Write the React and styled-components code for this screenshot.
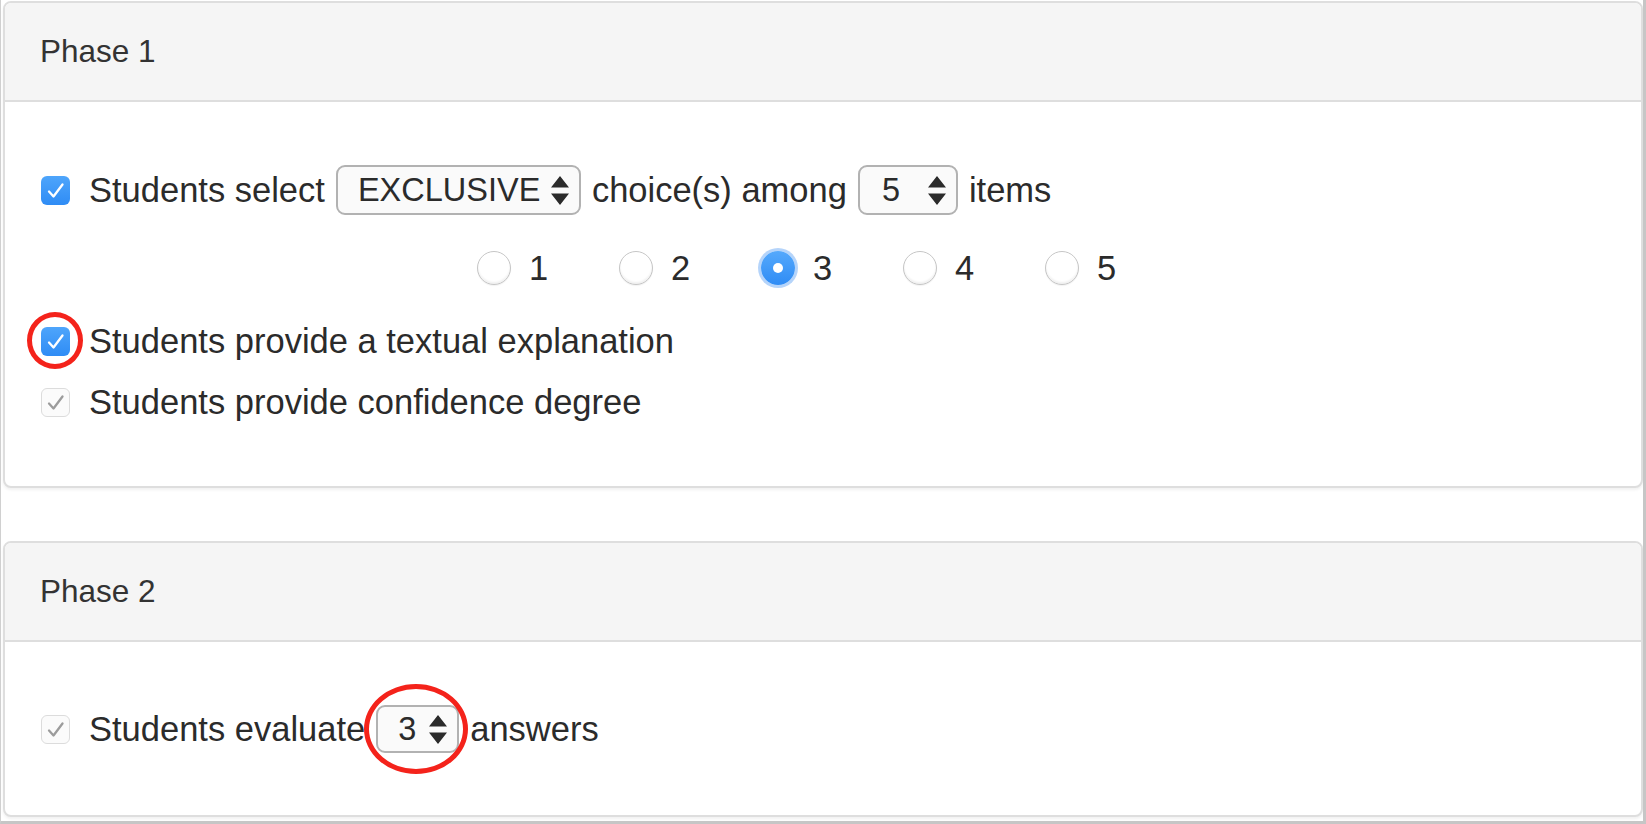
import React from 'react';
import styled, { createGlobalStyle, css } from 'styled-components';

const GlobalStyle = createGlobalStyle`
  html, body {
    margin: 0;
    padding: 0;
    background: #fff;
  }
  body {
    font-family: "Liberation Sans", Arial, sans-serif;
    color: #2b2b2b;
  }
`;

const Frame = styled.div`
  box-sizing: border-box;
  width: 1646px;
  height: 824px;
  border-left: 1px solid #d0d0d0;
  border-right: 3px solid #c6c6c6;
  border-bottom: 3px solid #c6c6c6;
  padding: 1px 0 0 2px;
  overflow: hidden;
`;

const Panel = styled.section`
  border: 2px solid #dedede;
  border-radius: 8px;
  box-shadow: 0 2px 3px rgba(0, 0, 0, 0.06);
  background: #fff;
  overflow: hidden;
  & + & {
    margin-top: 53px;
  }
`;

const Heading = styled.header`
  height: 97px;
  display: flex;
  align-items: center;
  padding-left: 35px;
  background: #f5f5f5;
  border-bottom: 2px solid #dedede;
  font-size: 31.5px;
  color: #333;
`;

const Body = styled.div`
  display: flex;
  flex-direction: column;
  padding: ${(p) => p.$pt}px 36px ${(p) => p.$pb}px;
`;

const Row = styled.div`
  display: flex;
  align-items: center;
  height: ${(p) => p.$h}px;
  margin-top: ${(p) => p.$mt || 0}px;
  padding-left: ${(p) => p.$pl || 0}px;
  font-size: 34.5px;
  white-space: pre;
`;

const Check = styled.span`
  position: relative;
  flex: none;
  box-sizing: border-box;
  width: 29px;
  height: 29px;
  margin-right: 19px;
  border-radius: 6px;
  display: flex;
  align-items: center;
  justify-content: center;
  ${(p) =>
    p.$disabled
      ? css`
          background: #fbfbfb;
          border: 1.5px solid #dcdcdc;
        `
      : css`
          background: linear-gradient(#4ea5fb, #2f8cf5);
        `}
`;

const Select = styled.span`
  position: relative;
  box-sizing: border-box;
  display: inline-flex;
  align-items: center;
  justify-content: space-between;
  width: ${(p) => p.$w}px;
  height: ${(p) => p.$h || 50}px;
  margin: 0 11px;
  padding: 0 10px 0 ${(p) => p.$pl}px;
  border: 2px solid #b2b2b2;
  border-radius: 9px;
  background: #fafafa;
  font-size: 32.5px;
  color: #2b2b2b;
`;

const RadioGroup = styled(Row)``;

const RadioItem = styled.label`
  display: flex;
  align-items: center;
  width: 142px;
  flex: none;
`;

const RadioDot = styled.span`
  flex: none;
  box-sizing: border-box;
  width: 34px;
  height: 34px;
  margin-right: 18px;
  border-radius: 50%;
  display: flex;
  align-items: center;
  justify-content: center;
  ${(p) =>
    p.$on
      ? css`
          background: linear-gradient(#55a9fc, #2f8cf5);
          box-shadow: 0 0 0 3px rgba(120, 176, 246, 0.55);
          &::after {
            content: '';
            width: 10px;
            height: 10px;
            border-radius: 50%;
            background: #fff;
          }
        `
      : css`
          background: #fff;
          border: 1.5px solid #c6c6c6;
          box-shadow: inset 0 -2px 2px rgba(0, 0, 0, 0.06), 0 1px 1px rgba(0, 0, 0, 0.05);
        `}
`;

const Ring = styled.span`
  position: absolute;
  top: ${(p) => p.$t}px;
  bottom: ${(p) => p.$b}px;
  left: ${(p) => p.$l}px;
  right: ${(p) => p.$r}px;
  border: 5.5px solid #f4231b;
  border-radius: 50%;
  pointer-events: none;
  z-index: 2;
`;

const Tick = ({ color }) => (
  <svg width="19" height="17" viewBox="0 0 19 17">
    <path d="M3 9.5 L7.5 14.5 L16.5 2.5" fill="none" stroke={color} strokeWidth="2.3" strokeLinecap="round" strokeLinejoin="round" />
  </svg>
);

const Arrows = () => (
  <svg width="18" height="29" viewBox="0 0 18 29">
    <path d="M9 0 L18 11.5 H0 Z M0 17.5 H18 L9 29 Z" fill="#2b2b2b" />
  </svg>
);

const Checkbox = ({ disabled, children }) => (
  <Check $disabled={disabled}>
    <Tick color={disabled ? '#9c9c9c' : '#fff'} />
    {children}
  </Check>
);

const choices = [1, 2, 3, 4, 5];

const App = () => {
  return (
    <Frame>
      <GlobalStyle />
      <Panel>
        <Heading>Phase 1</Heading>
        <Body $pt={63} $pb={64}>
          <Row $h={50}>
            <Checkbox />
            Students select
            <Select $w={245} $pl={20}>
              EXCLUSIVE
              <Arrows />
            </Select>
            choice(s) among
            <Select $w={100} $pl={22}>
              5
              <Arrows />
            </Select>
            items
          </Row>
          <RadioGroup $h={34} $mt={36} $pl={436}>
            {choices.map((n) => (
              <RadioItem key={n}>
                <RadioDot $on={n === 3} />
                {n}
              </RadioItem>
            ))}
          </RadioGroup>
          <Row $h={40} $mt={36}>
            <Checkbox>
              <Ring $t={-15} $b={-13} $l={-14} $r={-13} />
            </Checkbox>
            Students provide a textual explanation
          </Row>
          <Row $h={40} $mt={21}>
            <Checkbox disabled />
            Students provide confidence degree
          </Row>
        </Body>
      </Panel>
      <Panel>
        <Heading>Phase 2</Heading>
        <Body $pt={63} $pb={62}>
          <Row $h={48}>
            <Checkbox disabled />
            Students evaluate
            <Select $w={83} $h={48} $pl={20}>
              3
              <Arrows />
              <Ring $t={-23} $b={-23} $l={-14} $r={-11} />
            </Select>
            answers
          </Row>
        </Body>
      </Panel>
    </Frame>
  );
};

export default App;
